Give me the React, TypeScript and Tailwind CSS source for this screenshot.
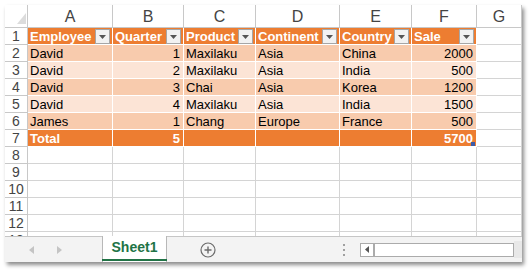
import React from 'react';

const COLS = [
  { letter: 'A', w: 85 },
  { letter: 'B', w: 71 },
  { letter: 'C', w: 72 },
  { letter: 'D', w: 84 },
  { letter: 'E', w: 72 },
  { letter: 'F', w: 65 },
  { letter: 'G', w: 45 },
];

const HEADERS = ['Employee', 'Quarter', 'Product', 'Continent', 'Country', 'Sale'];

const ROWS: (string | number)[][] = [
  ['David', 1, 'Maxilaku', 'Asia', 'China', 2000],
  ['David', 2, 'Maxilaku', 'Asia', 'India', 500],
  ['David', 3, 'Chai', 'Asia', 'Korea', 1200],
  ['David', 4, 'Maxilaku', 'Asia', 'India', 1500],
  ['James', 1, 'Chang', 'Europe', 'France', 500],
];

function FilterButton() {
  return (
    <span className="absolute right-[2px] top-[1px] w-[15px] h-[15px] border border-[#a6a6a6] bg-[#f2f2f2] flex items-center justify-center">
      <svg width="7" height="4" viewBox="0 0 7 4">
        <path d="M0 0 L7 0 L3.5 4 Z" fill="#555" />
      </svg>
    </span>
  );
}

function RowHeader({ n }: { n: number }) {
  return (
    <div className="w-[23px] shrink-0 h-full border-r border-b border-[#c8c8c8] flex items-center justify-center text-[14px] text-[#444]">
      {n}
    </div>
  );
}

export default function App() {
  return (
    <div className="w-[531px] h-[273px] bg-white relative" style={{ fontFamily: '"Liberation Sans", Arial, sans-serif' }}>
      <div className="absolute left-[5px] top-[5px] w-[517px] h-[257px] bg-white shadow-[2px_3px_4px_rgba(0,0,0,0.45)] flex flex-col overflow-hidden">
        {/* grid */}
        <div className="h-[231px] overflow-hidden">
          {/* column headers */}
          <div className="flex h-[23px]">
            <div className="w-[23px] shrink-0 border-r border-b border-[#c8c8c8] relative">
              <svg className="absolute left-[12px] top-[8px]" width="9" height="11" viewBox="0 0 9 11">
                <path d="M9 0 L9 11 L0 11 Z" fill="#dcdcdc" />
              </svg>
            </div>
            {COLS.map((c) => (
              <div
                key={c.letter}
                style={{ width: c.w }}
                className="shrink-0 border-r border-b border-[#c8c8c8] flex items-center justify-center pt-[1px] text-[16px] text-[#444]"
              >
                {c.letter}
              </div>
            ))}
          </div>

          {/* row 1: table header */}
          <div className="flex h-[17px]">
            <RowHeader n={1} />
            {HEADERS.map((h, i) => (
              <div
                key={h}
                style={{ width: COLS[i].w }}
                className="shrink-0 relative bg-[#ed7d31] border-r border-b border-white text-white font-bold text-[13px] leading-[17px] pl-[2px]"
              >
                {h}
                <FilterButton />
              </div>
            ))}
            <div style={{ width: COLS[6].w }} className="shrink-0 border-r border-b border-[#d4d4d4]" />
          </div>

          {/* data rows */}
          {ROWS.map((r, ri) => (
            <div key={ri} className="flex h-[17px]">
              <RowHeader n={ri + 2} />
              {r.map((v, ci) => (
                <div
                  key={ci}
                  style={{ width: COLS[ci].w }}
                  className={`shrink-0 border-r border-b border-white text-[13px] leading-[17px] text-black ${
                    ri % 2 === 0 ? 'bg-[#f8cbad]' : 'bg-[#fce4d6]'
                  } ${typeof v === 'number' ? 'text-right pr-[3px]' : 'pl-[2px]'}`}
                >
                  {v}
                </div>
              ))}
              <div style={{ width: COLS[6].w }} className="shrink-0 border-r border-b border-[#d4d4d4]" />
            </div>
          ))}

          {/* total row */}
          <div className="flex h-[17px]">
            <RowHeader n={7} />
            {['Total', '5', '', '', '', '5700'].map((v, ci) => (
              <div
                key={ci}
                style={{ width: COLS[ci].w }}
                className={`shrink-0 relative bg-[#ed7d31] border-r border-b border-white text-white font-bold text-[13px] leading-[17px] ${
                  ci === 0 ? 'pl-[2px]' : 'text-right pr-[3px]'
                }`}
              >
                {v}
                {ci === 5 && (
                  <span className="absolute right-[1px] bottom-[0px] w-[4px] h-[4px] bg-[#3b5ba8]" />
                )}
              </div>
            ))}
            <div style={{ width: COLS[6].w }} className="shrink-0 border-r border-b border-[#d4d4d4]" />
          </div>

          {/* empty rows */}
          {[8, 9, 10, 11, 12, 13].map((n) => (
            <div key={n} className="flex h-[17px]">
              <RowHeader n={n} />
              {COLS.map((c) => (
                <div key={c.letter} style={{ width: c.w }} className="shrink-0 border-r border-b border-[#d4d4d4]" />
              ))}
            </div>
          ))}
        </div>

        {/* sheet tab bar */}
        <div className="h-[26px] bg-[#f3f3f3] border-t border-[#c6c6c6] flex items-stretch relative">
          <div className="w-[97px] flex items-center gap-[23px] pl-[24px]">
            <svg width="5" height="8" viewBox="0 0 5 8">
              <path d="M5 0 L5 8 L0 4 Z" fill="#c4c4c4" />
            </svg>
            <svg width="5" height="8" viewBox="0 0 5 8">
              <path d="M0 0 L0 8 L5 4 Z" fill="#c4c4c4" />
            </svg>
          </div>
          <div className="-mt-px w-[65px] bg-white border-l border-r border-[#b8b8b8] flex flex-col">
            <div className="flex-1 flex items-center justify-center text-[14px] font-bold text-[#217346]">
              Sheet1
            </div>
            <div className="h-[2px] bg-[#217346] mx-[-1px] mb-[1px]" />
          </div>
          <div className="w-[82px] flex items-center justify-center">
            <svg width="16" height="16" viewBox="0 0 16 16">
              <circle cx="8" cy="8" r="7" fill="none" stroke="#6b6b6b" strokeWidth="1.2" />
              <path d="M8 4.5 V11.5 M4.5 8 H11.5" stroke="#6b6b6b" strokeWidth="1.4" />
            </svg>
          </div>
          <div className="w-[111px] flex items-center justify-end pr-[15px]">
            <div className="flex flex-col gap-[3px]">
              <span className="w-[2px] h-[2px] bg-[#a0a0a0]" />
              <span className="w-[2px] h-[2px] bg-[#a0a0a0]" />
              <span className="w-[2px] h-[2px] bg-[#a0a0a0]" />
            </div>
          </div>
          <div className="flex items-center">
            <div className="w-[154px] h-[14px] bg-white border border-[#ababab] flex">
              <div className="w-[14px] h-full border-r-2 border-[#ababab] flex items-center justify-center">
                <svg width="4" height="7" viewBox="0 0 4 7">
                  <path d="M4 0 L4 7 L0 3.5 Z" fill="#555" />
                </svg>
              </div>
            </div>
          </div>
          <div className="flex-1 bg-[#e8e8e8] my-[4px]" />
        </div>
      </div>
    </div>
  );
}
